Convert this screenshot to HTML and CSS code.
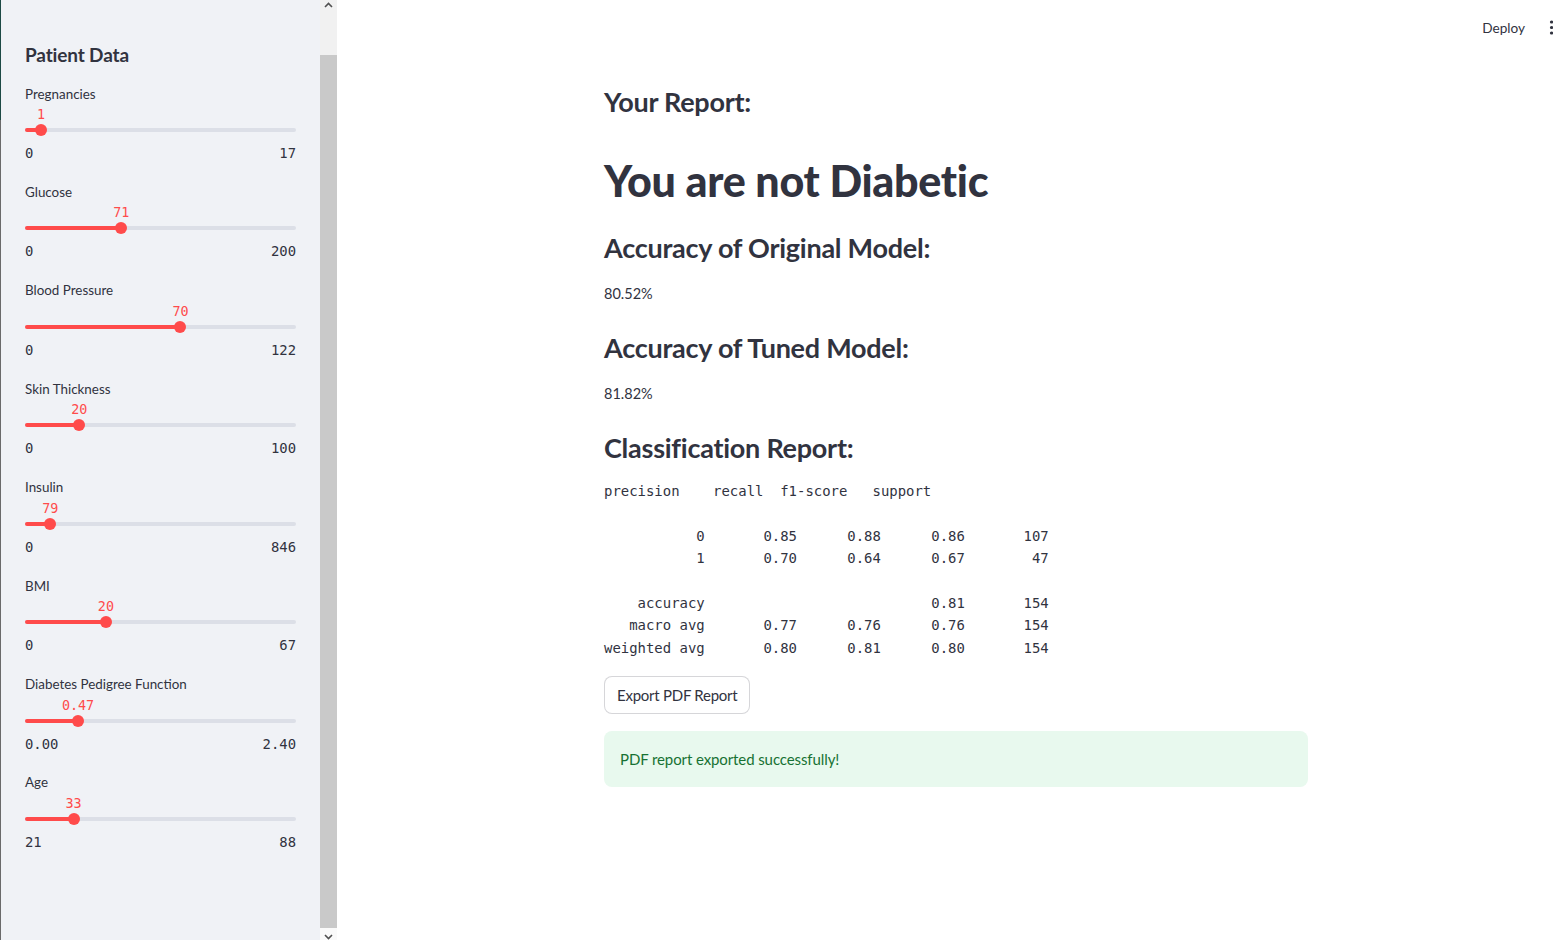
FILE: index.html
```html
<!DOCTYPE html>
<html>
<head>
<meta charset="utf-8">
<link rel="stylesheet" href="styles.css">
</head>
<body>
<div class="app">
  <div class="edge"></div>
  <aside class="sidebar">
    <h2 class="side-title">Patient Data</h2>

    <div class="slider">
      <div class="s-label">Pregnancies</div>
      <div class="s-value-row"><span class="s-value" style="left:5.88%">1</span></div>
      <div class="s-track"><div class="s-fill" style="width:5.88%"></div><div class="s-thumb" style="left:5.88%"></div></div>
      <div class="s-ticks"><span>0</span><span>17</span></div>
    </div>

    <div class="slider">
      <div class="s-label">Glucose</div>
      <div class="s-value-row"><span class="s-value" style="left:35.5%">71</span></div>
      <div class="s-track"><div class="s-fill" style="width:35.5%"></div><div class="s-thumb" style="left:35.5%"></div></div>
      <div class="s-ticks"><span>0</span><span>200</span></div>
    </div>

    <div class="slider">
      <div class="s-label">Blood Pressure</div>
      <div class="s-value-row"><span class="s-value" style="left:57.38%">70</span></div>
      <div class="s-track"><div class="s-fill" style="width:57.38%"></div><div class="s-thumb" style="left:57.38%"></div></div>
      <div class="s-ticks"><span>0</span><span>122</span></div>
    </div>

    <div class="slider">
      <div class="s-label">Skin Thickness</div>
      <div class="s-value-row"><span class="s-value" style="left:20%">20</span></div>
      <div class="s-track"><div class="s-fill" style="width:20%"></div><div class="s-thumb" style="left:20%"></div></div>
      <div class="s-ticks"><span>0</span><span>100</span></div>
    </div>

    <div class="slider">
      <div class="s-label">Insulin</div>
      <div class="s-value-row"><span class="s-value" style="left:9.34%">79</span></div>
      <div class="s-track"><div class="s-fill" style="width:9.34%"></div><div class="s-thumb" style="left:9.34%"></div></div>
      <div class="s-ticks"><span>0</span><span>846</span></div>
    </div>

    <div class="slider">
      <div class="s-label">BMI</div>
      <div class="s-value-row"><span class="s-value" style="left:29.85%">20</span></div>
      <div class="s-track"><div class="s-fill" style="width:29.85%"></div><div class="s-thumb" style="left:29.85%"></div></div>
      <div class="s-ticks"><span>0</span><span>67</span></div>
    </div>

    <div class="slider">
      <div class="s-label">Diabetes Pedigree Function</div>
      <div class="s-value-row"><span class="s-value" style="left:19.58%">0.47</span></div>
      <div class="s-track"><div class="s-fill" style="width:19.58%"></div><div class="s-thumb" style="left:19.58%"></div></div>
      <div class="s-ticks"><span>0.00</span><span>2.40</span></div>
    </div>

    <div class="slider">
      <div class="s-label">Age</div>
      <div class="s-value-row"><span class="s-value" style="left:17.91%">33</span></div>
      <div class="s-track"><div class="s-fill" style="width:17.91%"></div><div class="s-thumb" style="left:17.91%"></div></div>
      <div class="s-ticks"><span>21</span><span>88</span></div>
    </div>
  </aside>

  <div class="scrollbar">
    <div class="sb-btn">
      <svg width="17" height="10" viewBox="0 0 17 10"><path d="M5 7 L8.5 3.5 L12 7" fill="none" stroke="#505050" stroke-width="1.6"/></svg>
    </div>
    <div class="sb-space"></div>
    <div class="sb-thumb"></div>
    <div class="sb-end">
      <svg width="17" height="12" viewBox="0 0 17 12"><path d="M5 7 L8.5 10.5 L12 7" fill="none" stroke="#505050" stroke-width="1.6"/></svg>
    </div>
  </div>

  <main class="main">
    <header class="topbar">
      <span class="deploy">Deploy</span>
      <svg class="dots" width="4" height="16" viewBox="0 0 4 16"><circle cx="2.5" cy="2" r="1.6" fill="#31333f"/><circle cx="2.5" cy="7.5" r="1.6" fill="#31333f"/><circle cx="2.5" cy="13" r="1.6" fill="#31333f"/></svg>
    </header>
    <div class="content">
      <h3 class="h3 first">Your Report:</h3>
      <h1 class="h1">You are not Diabetic</h1>
      <h3 class="h3 after-h1">Accuracy of Original Model:</h3>
      <p class="para">80.52%</p>
      <h3 class="h3 after-p">Accuracy of Tuned Model:</h3>
      <p class="para">81.82%</p>
      <h3 class="h3 after-p">Classification Report:</h3>
<pre class="report">precision    recall  f1-score   support

           0       0.85      0.88      0.86       107
           1       0.70      0.64      0.67        47

    accuracy                           0.81       154
   macro avg       0.77      0.76      0.76       154
weighted avg       0.80      0.81      0.80       154</pre>
      <button class="btn">Export PDF Report</button>
      <div class="alert">PDF report exported successfully!</div>
    </div>
  </main>
</div>
</body>
</html>
```

FILE: styles.css
```css
* { box-sizing: border-box; }
html, body {
  margin: 0;
  padding: 0;
  width: 1553px;
  height: 940px;
  overflow: hidden;
  background: #ffffff;
  font-family: Lato, "Noto Sans", sans-serif;
  color: #31333f;
}
.app {
  display: flex;
  height: 940px;
}
.edge {
  width: 1px;
  flex: none;
  background: linear-gradient(to bottom, #1d4a45 0, #1d4a45 120px, #6a6a6a 120px, #6a6a6a 100%);
}
.sidebar {
  width: 319px;
  flex: none;
  background: #f0f2f6;
  padding: 43px 24px 0 24px;
  display: flex;
  flex-direction: column;
}
.side-title {
  margin: 0 0 16.5px 0;
  font-size: 19px;
  line-height: 24px;
  font-weight: 700;
  letter-spacing: -0.15px;
  color: #31333f;
}
.slider {
  display: flex;
  flex-direction: column;
  margin-bottom: 19.93px;
}
.s-label {
  font-size: 13.4px;
  line-height: 21px;
  height: 21px;
}
.s-value-row {
  position: relative;
  height: 16px;
  margin-top: 2.5px;
}
.s-value {
  position: absolute;
  top: 0;
  transform: translateX(-50%);
  font-family: "DejaVu Sans Mono", "Liberation Mono", monospace;
  font-size: 13.4px;
  line-height: 16px;
  color: #ff4b4b;
  white-space: nowrap;
}
.s-track {
  position: relative;
  height: 12px;
  margin-top: 1px;
  display: flex;
  align-items: center;
}
.s-track::before {
  content: "";
  display: block;
  width: 100%;
  height: 4px;
  border-radius: 2px;
  background: #dcdfe7;
}
.s-fill {
  position: absolute;
  left: 0;
  top: 4px;
  height: 4px;
  border-radius: 2px;
  background: #ff4b4b;
}
.s-thumb {
  position: absolute;
  top: 0;
  width: 12px;
  height: 12px;
  margin-left: -6px;
  border-radius: 50%;
  background: #ff4b4b;
}
.s-ticks {
  display: flex;
  justify-content: space-between;
  margin-top: 8px;
  font-family: "DejaVu Sans Mono", "Liberation Mono", monospace;
  font-size: 13.9px;
  line-height: 18px;
  height: 18px;
  color: #31333f;
}
.scrollbar {
  width: 17px;
  flex: none;
  display: flex;
  flex-direction: column;
  background: #f1f1f1;
}
.sb-btn {
  height: 10px;
  display: flex;
  justify-content: center;
}
.sb-space {
  height: 45px;
}
.sb-thumb {
  height: 873px;
  background: #c9c9c9;
}
.sb-end {
  flex: 1;
  display: flex;
  align-items: flex-end;
  background: #fafafa;
}
.main {
  flex: 1;
  display: flex;
  flex-direction: column;
  padding-left: 22px;
}
.topbar {
  height: 56px;
  display: flex;
  justify-content: flex-end;
  align-items: center;
}
.deploy {
  font-size: 13.6px;
  line-height: 20px;
  color: #31333f;
}
.dots {
  margin-left: 24px;
  flex: none;
}
.content {
  width: 704px;
  margin: 0 auto;
  display: flex;
  flex-direction: column;
  align-items: flex-start;
}
.h3 {
  margin: 0;
  font-size: 27px;
  line-height: 33.6px;
  font-weight: 700;
  letter-spacing: -0.25px;
  color: #31333f;
}
.first { margin-top: 29.2px; }
.h1 {
  margin: 35.8px 0 0 0;
  font-size: 43px;
  line-height: 52.8px;
  font-weight: 900;
  letter-spacing: -0.3px;
  color: #31333f;
}
.after-h1 { margin-top: 23.8px; }
.para {
  margin: 17.2px 0 0 0;
  font-size: 14.5px;
  line-height: 24px;
}
.after-p { margin-top: 25.2px; }
.report {
  margin: 15px 0 0 0;
  font-family: "DejaVu Sans Mono", "Liberation Mono", monospace;
  font-size: 13.95px;
  line-height: 22.4px;
  color: #31333f;
}
.btn {
  margin-top: 17px;
  height: 38px;
  padding: 0 12px;
  border: 1px solid rgba(49, 51, 63, 0.2);
  border-radius: 8px;
  background: #ffffff;
  font-family: Lato, "Noto Sans", sans-serif;
  font-size: 15px;
  letter-spacing: -0.25px;
  color: #31333f;
}
.alert {
  margin-top: 17px;
  width: 704px;
  height: 56px;
  padding: 0 16px;
  display: flex;
  align-items: center;
  border-radius: 8px;
  background: #e8f9ee;
  color: #177233;
  font-size: 15px;
  letter-spacing: -0.1px;
}
```
